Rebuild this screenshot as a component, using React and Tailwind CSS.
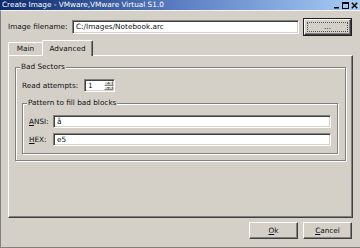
import React from 'react';

// classic bevels
const sunken =
  'border border-t-[#808080] border-l-[#808080] border-b-white border-r-white shadow-[inset_1px_1px_0_#404040,inset_-1px_-1px_0_#d4d0c8] bg-white';
const raised =
  'border border-t-white border-l-white border-b-[#404040] border-r-[#404040] shadow-[inset_-1px_-1px_0_#808080] bg-[#d4d0c8]';

const Group = ({ title, className, children }) => (
  <div className={`relative border border-[#808080] shadow-[inset_1px_1px_0_#fff,1px_1px_0_#fff] ${className}`}>
    <span className="absolute left-[4px] top-[-6px] bg-[#d4d0c8] px-[1px] leading-[10px]">{title}</span>
    {children}
  </div>
);

const TitleButtons = () => (
  <div className="flex items-center gap-[2px] pr-[2px]">
    <svg width="7" height="7" viewBox="0 0 7 7">
      <rect x="1" y="5" width="5" height="1.5" fill="#000" />
    </svg>
    <svg width="7" height="7" viewBox="0 0 7 7">
      <rect x="0.5" y="0.5" width="6" height="6" fill="none" stroke="#000" />
      <rect x="0.5" y="0.5" width="6" height="1.5" fill="#000" />
    </svg>
    <svg width="7" height="7" viewBox="0 0 7 7">
      <path d="M0.8 0.8 L6.2 6.2 M6.2 0.8 L0.8 6.2" stroke="#000" strokeWidth="1.4" />
    </svg>
  </div>
);

// tiny spin buttons are lighter than normal buttons
const spinBtn = 'border border-t-white border-l-white border-b-[#808080] border-r-[#808080] bg-[#d4d0c8]';

const Spinner = ({ value }) => (
  <div className={`${sunken} w-[31px] h-[13px] flex items-center justify-between pl-[3px] pr-[1px]`}>
    <span>{value}</span>
    <div className="flex flex-col h-[9px] w-[9px]">
      <div className={`${spinBtn} flex-1 flex items-center justify-center`}>
        <svg width="3" height="2" viewBox="0 0 3 2"><path d="M0 2 L1.5 0 L3 2 Z" fill="#606060" /></svg>
      </div>
      <div className={`${spinBtn} flex-1 flex items-center justify-center`}>
        <svg width="3" height="2" viewBox="0 0 3 2"><path d="M0 0 L1.5 2 L3 0 Z" fill="#606060" /></svg>
      </div>
    </div>
  </div>
);

const Field = ({ label, ul, value }) => (
  <div className="flex items-center">
    <span className="w-[24px]">
      <span className="underline">{ul}</span>
      {label}
    </span>
    <div className={`${sunken} flex-1 h-[13px] flex items-center px-[3px]`}>{value}</div>
  </div>
);

export default function App() {
  return (
    <div className="w-[360px] h-[248px] flex flex-col bg-[#d4d0c8] text-[7.3px] leading-none text-[#111] font-['DejaVu_Sans',Verdana,sans-serif] overflow-hidden">
      <div className="h-[10px] flex items-center justify-between bg-gradient-to-r from-[#0c2a6c] via-[#5b7fc2] to-[#a8cdf4]">
        <span className="pl-[2px] text-white">Create Image - VMware,VMware Virtual S1.0</span>
        <TitleButtons />
      </div>

      <div className="flex-1 flex flex-col border-l border-b border-[#808080] border-t border-t-[#f4f3f0] pl-[7px] pr-[8px]">
        <div className="mt-[7px] h-[18px] flex items-center">
          <span className="w-[64px]">Image filename:</span>
          <div className={`${sunken} w-[227px] h-[14px] flex items-center px-[3px]`}>C:/Images/Notebook.arc</div>
          <div className="ml-[4px] w-[49px] h-[18px] border border-[#202020]">
            <div className={`${raised} h-full p-[2px]`}>
              <div className="h-full border border-dotted border-[#505050] flex items-center justify-center">...</div>
            </div>
          </div>
        </div>

        <div className="mt-[4px] h-[15px] flex items-end">
          <div className="w-[34px] h-[13px] border-t border-l border-white rounded-tl-[2px] flex items-center justify-center">
            Main
          </div>
          <div className="relative z-10 w-[51px] h-[16px] -mb-[1px] bg-[#d4d0c8] border-t border-l border-white border-r border-r-[#404040] shadow-[inset_-1px_0_0_#808080] rounded-t-[2px] flex items-start justify-center pt-[4px]">
            Advanced
          </div>
        </div>

        <div className="w-[345px] h-[163px] border border-t-white border-l-white border-b-[#404040] border-r-[#404040] shadow-[inset_-1px_-1px_0_#808080] px-[6px] pt-[11px]">
          <Group title="Bad Sectors" className="pl-[6px] pr-[7px] pt-[11px] pb-[6px]">
            <div className="flex items-center">
              <span className="w-[62px]">Read attempts:</span>
              <Spinner value="1" />
            </div>
            <Group title="Pattern to fill bad blocks" className="mt-[11px] pl-[6px] pr-[6px] pt-[11px] pb-[7px] flex flex-col gap-[5px]">
              <Field ul="A" label="NSI:" value="å" />
              <Field ul="H" label="EX:" value="e5" />
            </Group>
          </Group>
        </div>

        <div className="mt-[4px] flex justify-end gap-[5px]">
          <div className={`${raised} w-[49px] h-[17px] flex items-center justify-center`}>
            <span><span className="underline">O</span>k</span>
          </div>
          <div className={`${raised} w-[49px] h-[17px] flex items-center justify-center`}>
            <span><span className="underline">C</span>ancel</span>
          </div>
        </div>
      </div>
    </div>
  );
}
